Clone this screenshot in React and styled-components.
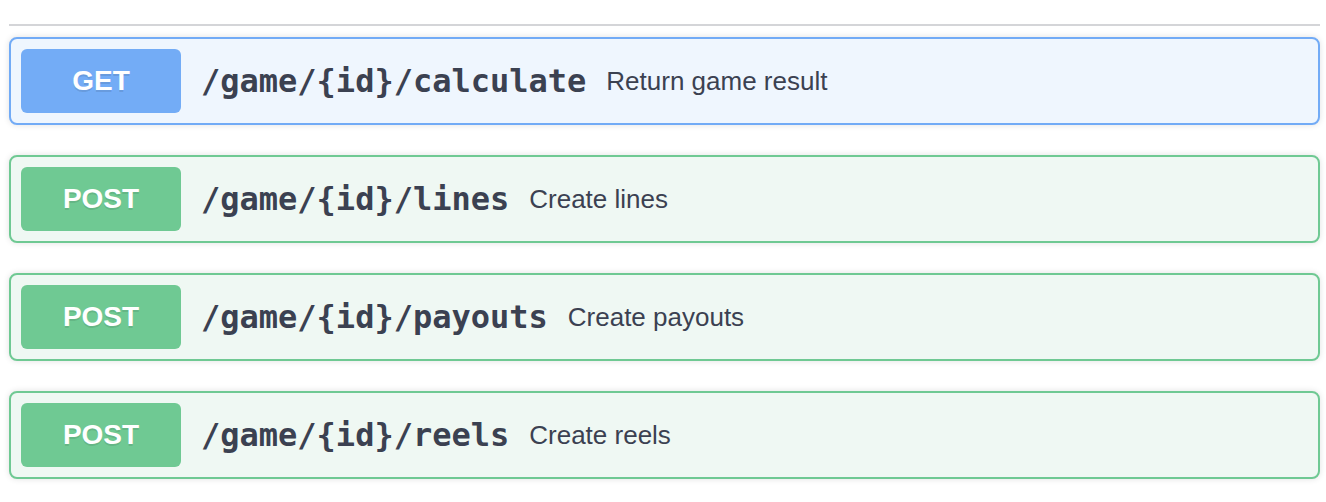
import React from 'react'
import styled, {createGlobalStyle} from 'styled-components'

const GlobalStyle = createGlobalStyle`
    body {
        margin: 0;
        background: #fff;
        font-family: "Liberation Sans", Arial, sans-serif;
    }
`

const colors = {
    get: {main: '#73acf6', bg: '#eff6fe', border: '#72abf6'},
    post: {main: '#6fc993', bg: '#eff8f3', border: '#6fc993'},
}

const Wrapper = styled.div`
    padding: 24px 6px 0 9px;
`

const Divider = styled.div`
    height: 2px;
    background: #d4d5d8;
    margin-bottom: 11px;
`

const Block = styled.div`
    display: flex;
    align-items: center;
    padding: 10px;
    margin-bottom: 30px;
    border: 2px solid ${p => colors[p.method].border};
    border-radius: 8px;
    background: ${p => colors[p.method].bg};
    box-shadow: 0 0 6px rgba(0, 0, 0, 0.12);
`

const Method = styled.span`
    display: flex;
    align-items: center;
    justify-content: center;
    width: 160px;
    height: 64px;
    flex-shrink: 0;
    border-radius: 6px;
    background: ${p => colors[p.method].main};
    color: #fff;
    font-family: "Liberation Sans", Arial, sans-serif;
    font-weight: 700;
    font-size: 28px;
    text-shadow: 0 2px 0 rgba(0, 0, 0, 0.1);
`

const Path = styled.span`
    padding: 0 20px;
    color: #3b4151;
    font-family: "DejaVu Sans Mono", monospace;
    font-weight: 700;
    font-size: 32px;
`

const Description = styled.span`
    color: #3b4151;
    font-size: 26px;
`

const ops = [
    {method: 'get', path: '/game/{id}/calculate', summary: 'Return game result'},
    {method: 'post', path: '/game/{id}/lines', summary: 'Create lines'},
    {method: 'post', path: '/game/{id}/payouts', summary: 'Create payouts'},
    {method: 'post', path: '/game/{id}/reels', summary: 'Create reels'},
]

const App = () => (
    <Wrapper>
        <GlobalStyle />
        <Divider />
        {ops.map(op => (
            <Block key={op.path} method={op.method}>
                <Method method={op.method}>{op.method.toUpperCase()}</Method>
                <Path>{op.path}</Path>
                <Description>{op.summary}</Description>
            </Block>
        ))}
    </Wrapper>
)

export default App
